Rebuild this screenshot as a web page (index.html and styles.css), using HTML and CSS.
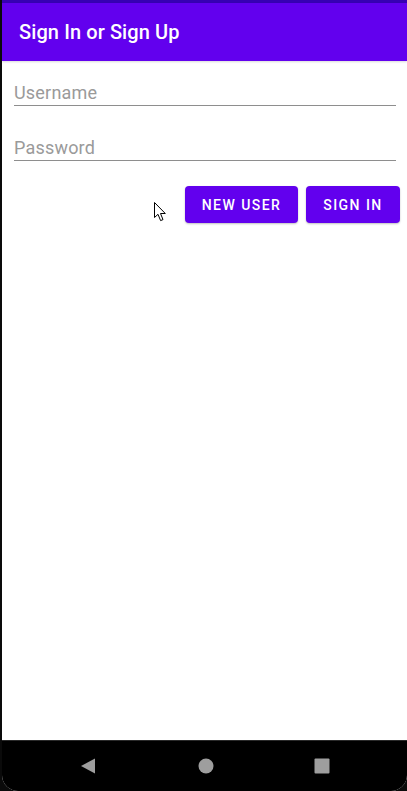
FILE: index.html
```html
<!DOCTYPE html>
<html>
<head>
<meta charset="utf-8">
<link rel="stylesheet" href="styles.css">
</head>
<body>
<div class="device">
  <div class="screen">
    <div class="statusbar"></div>
    <header class="appbar"><h1 class="title">Sign In or Sign Up</h1></header>
    <main class="content">
      <div class="field"><span class="placeholder">Username</span></div>
      <div class="field"><span class="placeholder">Password</span></div>
      <div class="actions">
        <button class="btn btn-new">NEW USER</button>
        <button class="btn btn-sign">SIGN IN</button>
      </div>
      <svg class="cursor" width="14" height="21" viewBox="0 0 14 21">
        <path d="M0.5 0.5 L0.5 15.5 L4 12.3 L6.6 18.6 L9 17.6 L6.5 11.5 L11.3 11.5 Z" fill="#fff" stroke="#000" stroke-width="1"/>
      </svg>
    </main>
    <nav class="navbar">
      <svg class="nav-icon" width="16" height="16" viewBox="0 0 16 16"><path d="M1 8 L15 0.5 L15 15.5 Z" fill="#9e9e9e"/></svg>
      <svg class="nav-icon" width="16" height="16" viewBox="0 0 16 16"><circle cx="8" cy="8" r="7.5" fill="#9e9e9e"/></svg>
      <svg class="nav-icon" width="16" height="16" viewBox="0 0 16 16"><rect x="0.5" y="0.5" width="15" height="15" rx="1" fill="#9e9e9e"/></svg>
    </nav>
  </div>
</div>
</body>
</html>
```

FILE: styles.css
```css
* { box-sizing: border-box; }
html, body { margin: 0; padding: 0; background: #121212; }
body { width: 407px; height: 791px; overflow: hidden; font-family: Roboto, "Noto Sans", sans-serif; }
.device { width: 407px; height: 791px; padding-left: 2px; background: #0a0a0a; }
.screen { width: 405px; height: 791px; display: flex; flex-direction: column; background: #fff; border-bottom-left-radius: 16px; border-bottom-right-radius: 16px; overflow: hidden; }
.statusbar { height: 3px; background: #3700b3; flex: none; }
.appbar { height: 58px; background: #6200ee; display: flex; align-items: center; padding-left: 17px; flex: none; box-shadow: 0 1px 2px rgba(0,0,0,0.15); }
.title { margin: 0; color: #fff; font-size: 20px; font-weight: 500; letter-spacing: 0.1px; }
.content { flex: 1; position: relative; padding: 18px 7px 0 12px; }
.field { height: 27px; border-bottom: 1.5px solid #8e8e8e; margin: 0 4px 28px 0; padding-top: 2px; }
.placeholder { color: #9a9a9a; font-size: 18px; font-weight: 400; letter-spacing: 0.2px; line-height: 24px; display: block; }
.actions { display: flex; justify-content: flex-end; gap: 8px; margin-top: -3px; }
.btn { height: 37px; border: none; border-radius: 4px; background: #6200ee; color: #fff; font-family: Roboto, sans-serif; font-weight: 500; font-size: 14px; letter-spacing: 1.45px; padding: 0 12px; box-shadow: 0 1px 2px rgba(0,0,0,0.25); }
.btn-new { width: 113px; }
.btn-sign { width: 94px; }
.cursor { position: absolute; left: 152px; top: 141px; }
.navbar { height: 51px; background: #000; border-top: 1px solid #2a2a2a; display: flex; align-items: center; flex: none; padding-left: 78px; }
.nav-icon:nth-child(2) { margin-left: 102px; }
.nav-icon:nth-child(3) { margin-left: 100px; }
```
